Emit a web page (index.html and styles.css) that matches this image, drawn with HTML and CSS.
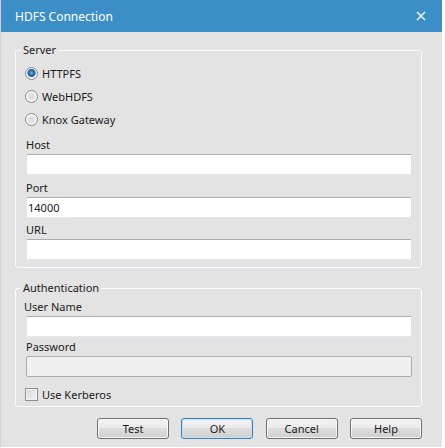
FILE: index.html
```html
<!DOCTYPE html>
<html>
<head>
<meta charset="utf-8">
<link rel="stylesheet" href="styles.css">
</head>
<body>
<div class="dialog">
  <div class="titlebar">
    <span class="title">HDFS Connection</span>
    <svg class="close" width="10" height="10" viewBox="0 0 10 10"><path d="M1 1L9 9M9 1L1 9" stroke="#fff" stroke-width="1.4" fill="none"/></svg>
  </div>
  <div class="content">
    <div class="group server">
      <div class="legend">Server</div>
      <div class="radios">
        <div class="radio-row"><span class="radio checked"></span><span>HTTPFS</span></div>
        <div class="radio-row"><span class="radio"></span><span>WebHDFS</span></div>
        <div class="radio-row"><span class="radio"></span><span>Knox Gateway</span></div>
      </div>
      <div class="label host">Host</div>
      <div class="input"></div>
      <div class="label port">Port</div>
      <div class="input">14000</div>
      <div class="label url">URL</div>
      <div class="input"></div>
    </div>
    <div class="group auth">
      <div class="legend">Authentication</div>
      <div class="label user">User Name</div>
      <div class="input"></div>
      <div class="label pass">Password</div>
      <div class="input disabled"></div>
      <div class="check-row"><span class="checkbox"></span><span>Use Kerberos</span></div>
    </div>
    <div class="buttons">
      <div class="btn">Test</div>
      <div class="btn default">OK</div>
      <div class="btn">Cancel</div>
      <div class="btn">Help</div>
    </div>
  </div>
</div>
</body>
</html>
```
FILE: styles.css
```css
html, body {
  margin: 0;
  padding: 0;
  background: #ffffff;
}
body {
  font-family: "Noto Sans", "Open Sans", "Liberation Sans", sans-serif;
  font-size: 11px;
  color: #1a1a1a;
}
.dialog {
  width: 441px;
  height: 447px;
  background: #e3e3e3;
  border-left: 1px solid #d2d2d2;
  display: flex;
  flex-direction: column;
}
.titlebar {
  height: 32px;
  background: #3c8fc6;
  display: flex;
  align-items: center;
  justify-content: space-between;
  padding: 0 16px 0 14px;
  flex-shrink: 0;
}
.title {
  color: #ffffff;
  font-size: 12px;
}
.close {
  display: block;
}
.content {
  padding: 18px 20px 0 14px;
}
.group {
  border: 1px solid #fbfbfb;
  border-radius: 3px;
  padding: 0 9px 0 10px;
}
.legend {
  display: table;
  margin: -9px 0 0 -5px;
  padding: 0 2px;
  background: #e3e3e3;
  line-height: 16px;
}
.radios {
  margin-top: 4px;
  margin-left: -1px;
}
.radio-row {
  height: 23px;
  display: flex;
  align-items: center;
  gap: 4px;
}
.radio {
  width: 11px;
  height: 11px;
  border: 1px solid #8a8a8a;
  border-radius: 50%;
  background: radial-gradient(circle at 50% 50%, #d8d8d8 0, #e4e4e4 45%, #f8f8f8 60%, #ffffff 100%);
  box-sizing: content-box;
}
.radio.checked {
  background: radial-gradient(circle at 50% 45%, #6fb9ee 0, #1f5f9e 35%, #2d6ea6 45%, #f0f0f0 55%, #ffffff 100%);
}
.label {
  line-height: 18px;
}
.label.host {
  margin-top: 5px;
}
.label.port {
  margin-top: 4px;
}
.label.url {
  margin-top: 3px;
}
.input {
  height: 19px;
  background: #ffffff;
  border: 1px solid #e3e9ef;
  border-top-color: #abadb3;
  border-left-color: #e2e3ea;
  border-right-color: #dbdfe6;
  border-radius: 2px;
  line-height: 19px;
  padding-left: 1px;
}
.server {
  padding-bottom: 7px;
}
.auth {
  margin-top: 20px;
  padding-bottom: 3px;
}
.label.user {
  margin-top: 2px;
  margin-left: -2px;
}
.label.pass {
  margin-top: 1px;
}
.input.disabled {
  background: #f0f0f0;
  border-color: #adadad;
}
.check-row {
  display: flex;
  align-items: center;
  gap: 4px;
  height: 17px;
  margin-top: 9px;
  margin-left: -1px;
}
.checkbox {
  width: 11px;
  height: 11px;
  border: 1px solid #8e8f8f;
  background: linear-gradient(135deg, #d6d6d6, #f4f4f4);
  box-shadow: inset 0 0 0 1px #f4f4f4;
  box-sizing: content-box;
}
.buttons {
  display: flex;
  justify-content: flex-end;
  gap: 12.3px;
  margin-top: 11px;
}
.btn {
  width: 70px;
  height: 19px;
  border: 1px solid #707070;
  border-radius: 3px;
  background: linear-gradient(#f2f2f2 0%, #ebebeb 50%, #dddddd 50%, #cfcfcf 100%);
  box-shadow: inset 0 0 0 1px #f8f8f8;
  text-align: center;
  line-height: 19px;
}
.btn.default {
  border-color: #3c7fb1;
  box-shadow: inset 0 0 0 1px #c6e4f7;
}
```
